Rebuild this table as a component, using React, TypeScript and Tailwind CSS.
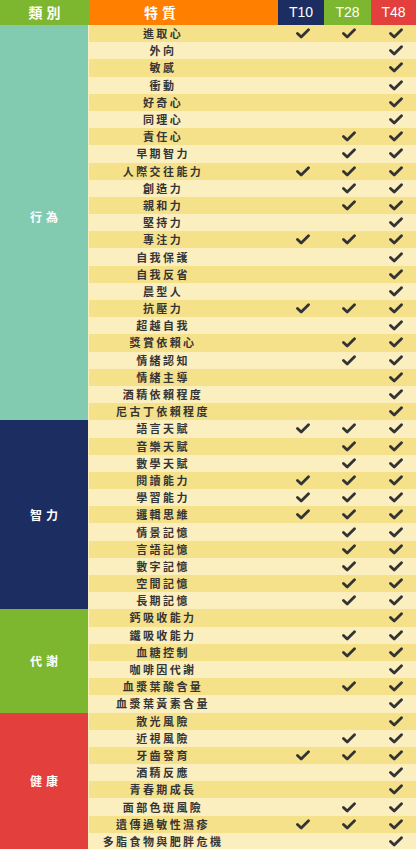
import React from 'react';

type Row = [string, number, number, number];

const groups: { label: string; bg: string; pad: string; rows: Row[] }[] = [
  {
    label: '行為',
    bg: 'bg-[#82cbb1]',
    pad: 'pb-[12px]',
    rows: [
      ['進取心', 1, 1, 1],
      ['外向', 0, 0, 1],
      ['敏感', 0, 0, 1],
      ['衝動', 0, 0, 1],
      ['好奇心', 0, 0, 1],
      ['同理心', 0, 0, 1],
      ['責任心', 0, 1, 1],
      ['早期智力', 0, 1, 1],
      ['人際交往能力', 1, 1, 1],
      ['創造力', 0, 1, 1],
      ['親和力', 0, 1, 1],
      ['堅持力', 0, 0, 1],
      ['專注力', 1, 1, 1],
      ['自我保護', 0, 0, 1],
      ['自我反省', 0, 0, 1],
      ['晨型人', 0, 0, 1],
      ['抗壓力', 1, 1, 1],
      ['超越自我', 0, 0, 1],
      ['獎賞依賴心', 0, 1, 1],
      ['情緒認知', 0, 1, 1],
      ['情緒主導', 0, 0, 1],
      ['酒精依賴程度', 0, 0, 1],
      ['尼古丁依賴程度', 0, 0, 1],
    ],
  },
  {
    label: '智力',
    bg: 'bg-[#1c2d62]',
    pad: '',
    rows: [
      ['語言天賦', 1, 1, 1],
      ['音樂天賦', 0, 1, 1],
      ['數學天賦', 0, 1, 1],
      ['閱讀能力', 1, 1, 1],
      ['學習能力', 1, 1, 1],
      ['邏輯思維', 1, 1, 1],
      ['情景記憶', 0, 1, 1],
      ['言語記憶', 0, 1, 1],
      ['數字記憶', 0, 1, 1],
      ['空間記憶', 0, 1, 1],
      ['長期記憶', 0, 1, 1],
    ],
  },
  {
    label: '代謝',
    bg: 'bg-[#7db72f]',
    pad: '',
    rows: [
      ['鈣吸收能力', 0, 0, 1],
      ['鐵吸收能力', 0, 1, 1],
      ['血糖控制', 0, 1, 1],
      ['咖啡因代謝', 0, 0, 1],
      ['血漿葉酸含量', 0, 1, 1],
      ['血漿葉黃素含量', 0, 0, 1],
    ],
  },
  {
    label: '健康',
    bg: 'bg-[#e33f3d]',
    pad: '',
    rows: [
      ['散光風險', 0, 0, 1],
      ['近視風險', 0, 1, 1],
      ['牙齒發育', 1, 1, 1],
      ['酒精反應', 0, 0, 1],
      ['青春期成長', 0, 0, 1],
      ['面部色斑風險', 0, 1, 1],
      ['遺傳過敏性濕疹', 1, 1, 1],
      ['多脂食物與肥胖危機', 0, 0, 1],
    ],
  },
];

const Check = () => (
  <svg width="14" height="11" viewBox="0 0 14 11" className="block">
    <path d="M1.5 5.5 L5.2 9 L12.5 1.8" fill="none" stroke="#333333" strokeWidth="2.8" strokeLinecap="round" strokeLinejoin="round" />
  </svg>
);

const latin = { fontFamily: '"Liberation Sans", Arial, sans-serif' };

export default function App() {
  let idx = 0;
  return (
    <div className="w-[416px] bg-white" style={{ fontFamily: '"Noto Sans CJK TC", "Noto Sans", sans-serif' }}>
      {/* header */}
      <div className="flex h-[25px] text-white">
        <div className="w-[89px] bg-[#7db72f] flex items-center justify-center text-[14px] font-bold tracking-[4px] pl-[4px]">類別</div>
        <div className="w-[189px] bg-[#ff8000] flex items-center">
          <div className="w-[142px] text-center text-[14px] font-bold tracking-[4px] pl-[4px]">特質</div>
        </div>
        <div className="w-[46px] bg-[#1c2d62] flex items-center justify-center text-[14px]" style={latin}>T10</div>
        <div className="w-[47px] bg-[#7db72f] flex items-center justify-center text-[14px]" style={latin}>T28</div>
        <div className="flex-1 bg-[#e33f3d] flex items-center justify-center text-[14px]" style={latin}>T48</div>
      </div>

      {groups.map((g) => (
        <div key={g.label} className="flex">
          <div className={`w-[89px] ${g.bg} ${g.pad} border-r border-[#fbeebf] flex items-center justify-center text-white text-[12px] font-bold tracking-[4px] pl-[4px]`}>
            {g.label}
          </div>
          <div className="flex-1 flex flex-col">
            {g.rows.map((r) => {
              const dark = idx++ % 2 === 0;
              return (
                <div key={r[0]} className={`flex h-[17.2px] items-center ${dark ? 'bg-[#f6e18b]' : 'bg-[#fbeebf]'}`}>
                  <div className="w-[144px] text-center text-[11px] font-bold text-[#353535] tracking-[2.4px] pl-[4px] leading-none whitespace-nowrap">
                    {r[0]}
                  </div>
                  <div className="w-[44px]" />
                  <div className="w-[46px] flex justify-center pl-[5px]">{r[1] ? <Check /> : null}</div>
                  <div className="w-[47px] flex justify-center pl-[5px]">{r[2] ? <Check /> : null}</div>
                  <div className="flex-1 flex justify-center pl-[5px]">{r[3] ? <Check /> : null}</div>
                </div>
              );
            })}
          </div>
        </div>
      ))}
    </div>
  );
}
